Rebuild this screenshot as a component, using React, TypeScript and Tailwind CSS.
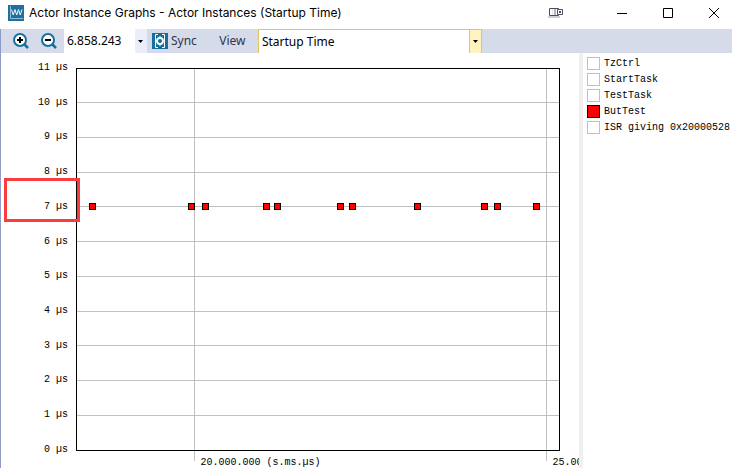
import React, { useState } from "react";

type Actor = {
  name: string;
  enabled: boolean;
};

const ACTORS: Actor[] = [
  { name: "TzCtrl", enabled: false },
  { name: "StartTask", enabled: false },
  { name: "TestTask", enabled: false },
  { name: "ButTest", enabled: true },
  { name: "ISR giving 0x20000528", enabled: false },
];

// visible time window, in seconds
const START = 18.319;
const SPAN = 6.858243;
const MAX_US = 11;

const TICKS = [
  { at: 20, label: "20.000.000 (s.ms.µs)" },
  { at: 25, label: "25.000.000" },
];

const SAMPLES = [
  18.552, 19.958, 20.157, 21.023, 21.179, 22.074, 22.244, 23.167, 24.118,
  24.303, 24.857,
].map((at) => ({ at, us: 7 }));

const US_VALUES = Array.from({ length: MAX_US + 1 }, (_, i) => MAX_US - i);

const toX = (at: number) => `${((at - START) / SPAN) * 100}%`;
const toY = (us: number) => `${(1 - us / MAX_US) * 100}%`;

function AppIcon() {
  return (
    <svg width="16" height="16" viewBox="0 0 16 16" aria-hidden="true">
      <rect width="16" height="16" fill="#1f6f9f" />
      <path d="M2.500 1v12.500H15" fill="none" stroke="#8fbcd4" />
      <path
        d="M3.500 4.500L5.200 10 7 4.500 8.700 10l1.800-5.500 1.700 5.500L14 4.500"
        fill="none"
        stroke="#f2f8fb"
      />
    </svg>
  );
}

function ZoomIcon({ plus }: { plus?: boolean }) {
  return (
    <svg width="18" height="18" viewBox="0 0 18 18" aria-hidden="true">
      <circle cx="8" cy="8" r="6" fill="#fff" stroke="#14709a" strokeWidth="2" />
      <path d="M12.500 12.500l3.500 3.500" stroke="#14709a" strokeWidth="2.500" />
      <path d="M5 8h6" stroke="#000" strokeWidth="2" />
      {plus && <path d="M8 5v6" stroke="#000" strokeWidth="2" />}
    </svg>
  );
}

function SyncIcon() {
  return (
    <svg width="16" height="16" viewBox="0 0 16 16" aria-hidden="true">
      <rect width="16" height="16" fill="#14709a" />
      <path
        d="M6 1.500H3.500v13H6M10 1.500h2.500v13H10"
        fill="none"
        stroke="#fff"
      />
      <circle cx="8" cy="8" r="3" fill="none" stroke="#fff" strokeWidth="1.800" />
      <path d="M8 3v2M8 11v2" stroke="#fff" />
    </svg>
  );
}

function DockIcon() {
  return (
    <svg width="16" height="12" viewBox="0 0 16 12" aria-hidden="true">
      <path d="M0 9h12v2H0z" fill="#cfcfd6" />
      <path d="M1.500 1.500h9v7h-9z" fill="#fff" stroke="#4d4d5c" />
      <path d="M4.500 2v6" stroke="#e4e4ea" />
      <path d="M6 2h2v6H6z" fill="#b4b4c0" />
      <path d="M9.500 2.500h5v5h-5z" fill="#fff" stroke="#4d4d5c" />
      <path d="M11 4h2v2h-2z" fill="#4d4d5c" />
    </svg>
  );
}

function Arrow() {
  return (
    <svg width="5" height="3" viewBox="0 0 5 3" aria-hidden="true">
      <path d="M0 0h5L2.500 3z" fill="#000" />
    </svg>
  );
}

function TitleBar() {
  return (
    <header className="flex h-[29px] items-center bg-white pb-[3px] pl-2">
      <AppIcon />
      <h1 className="ml-[5px] flex-1 truncate font-['Inter',sans-serif] text-[12px] text-black">
        Actor Instance Graphs - Actor Instances (Startup Time)
      </h1>
      <div className="flex items-center gap-2.5">
        <button
          type="button"
          aria-label="Dock"
          className="mr-7 flex h-6 w-5 items-center justify-center"
        >
          <DockIcon />
        </button>
        <button
          type="button"
          aria-label="Minimize"
          className="flex h-6 w-9 items-center justify-center"
        >
          <svg width="10" height="11" viewBox="0 0 10 11">
            <path d="M0 5.500h10" stroke="#000" />
          </svg>
        </button>
        <button
          type="button"
          aria-label="Maximize"
          className="flex h-6 w-9 items-center justify-center"
        >
          <svg width="10" height="10" viewBox="0 0 10 10">
            <path d="M.5.5h9v9h-9z" fill="none" stroke="#000" />
          </svg>
        </button>
        <button
          type="button"
          aria-label="Close"
          className="flex h-6 w-9 items-center justify-center"
        >
          <svg width="10" height="10" viewBox="0 0 10 10">
            <path d="M0 0l10 10M10 0L0 10" stroke="#000" />
          </svg>
        </button>
      </div>
    </header>
  );
}

function Toolbar() {
  const [range, setRange] = useState("6.858.243");

  return (
    <div className="flex h-6 items-stretch bg-[#d6dbe9] text-[12px]">
      <button type="button" aria-label="Zoom in" className="ml-[11px] w-[18px]">
        <ZoomIcon plus />
      </button>
      <button type="button" aria-label="Zoom out" className="ml-2.5 w-[18px]">
        <ZoomIcon />
      </button>
      <input
        aria-label="Time range"
        className="ml-1.5 w-[71px] bg-white pl-[3px] text-black outline-none"
        value={range}
        onChange={(e) => setRange(e.target.value)}
      />
      <button
        type="button"
        aria-label="Range presets"
        className="flex w-3 items-center justify-center bg-[#eaeefa] pr-0.5"
      >
        <Arrow />
      </button>
      <button
        type="button"
        className="ml-[5px] flex items-center gap-[3px] text-[#2d3550]"
      >
        <SyncIcon />
        Sync
      </button>
      <button type="button" className="ml-[22px] w-[27px] text-[#2d3550]">
        View
      </button>
      <div className="relative ml-3 w-[224px]">
        <select
          aria-label="Graph type"
          className="h-full w-full appearance-none border border-b-0 border-[#e5c365] bg-white pl-[3px] text-black outline-none"
        >
          <option>Startup Time</option>
        </select>
        <span className="pointer-events-none absolute inset-y-0 right-0 flex w-[13px] items-center justify-center border border-b-0 border-[#e5c365] bg-[#fff2be]">
          <Arrow />
        </span>
      </div>
    </div>
  );
}

function Graph() {
  return (
    <main className="relative flex min-w-0 flex-1 overflow-hidden bg-white font-['Liberation_Mono',monospace] text-[10px] text-black">
      <ul className="flex w-[67px] flex-col justify-between pt-[7px] pb-2.5 text-right">
        {US_VALUES.map((us) => (
          <li key={us} className="h-4 leading-4">
            {us} µs
          </li>
        ))}
      </ul>

      <div className="mt-[15px] mr-5 mb-[18px] ml-2 flex-1">
        <svg
          className="block h-full w-full overflow-visible"
          shapeRendering="crispEdges"
        >
          {US_VALUES.map((us) => (
            <line
              key={us}
              x1="0"
              x2="100%"
              y1={toY(us)}
              y2={toY(us)}
              stroke="#c0c0c0"
            />
          ))}
          {TICKS.map(({ at, label }) => (
            <g key={at}>
              <line x1={toX(at)} x2={toX(at)} y1="0" y2="100%" stroke="#c0c0c0" />
              <svg x={toX(at)} y="100%" className="overflow-visible">
                <line x1="0" x2="0" y1="0" y2="11" stroke="#c0c0c0" />
                <text x="6" y="15">
                  {label}
                </text>
              </svg>
            </g>
          ))}
          <rect width="100%" height="100%" fill="none" stroke="#000" />
          {SAMPLES.map(({ at, us }) => (
            <svg key={at} x={toX(at)} y={toY(us)} className="overflow-visible">
              <rect x="-3" y="-3" width="6" height="6" fill="#f00" stroke="#000" />
            </svg>
          ))}
        </svg>
      </div>

      {/* highlight over the 7 µs row */}
      <div className="pointer-events-none absolute top-[125px] left-[3px] h-11 w-[76px] border-3 border-[#fa3c3c]" />
    </main>
  );
}

function Legend() {
  const [actors, setActors] = useState(ACTORS);

  const toggle = (name: string) =>
    setActors(
      actors.map((a) => (a.name === name ? { ...a, enabled: !a.enabled } : a)),
    );

  return (
    <aside className="w-[153px] shrink-0 border-l-4 border-[#f0f0f0] bg-white pt-0.5 pl-1 font-['Liberation_Mono',monospace] text-[10px] text-black">
      {actors.map(({ name, enabled }) => (
        <label
          key={name}
          className="flex h-4 items-center gap-1 leading-4 whitespace-nowrap"
        >
          <input
            type="checkbox"
            className="size-[13px] appearance-none border border-[#c0c0c0] bg-white checked:border-black checked:bg-[#f00]"
            checked={enabled}
            onChange={() => toggle(name)}
          />
          <span className="pt-0.5">{name}</span>
        </label>
      ))}
    </aside>
  );
}

export default function App() {
  return (
    <div className="flex min-h-screen flex-col bg-white font-['Noto_Sans','Noto_Sans_CJK_SC',sans-serif]">
      <TitleBar />
      <div className="flex flex-1 flex-col border-l border-[#8e9bc6]">
        <Toolbar />
        <div className="flex flex-1">
          <Graph />
          <Legend />
        </div>
      </div>
    </div>
  );
}
